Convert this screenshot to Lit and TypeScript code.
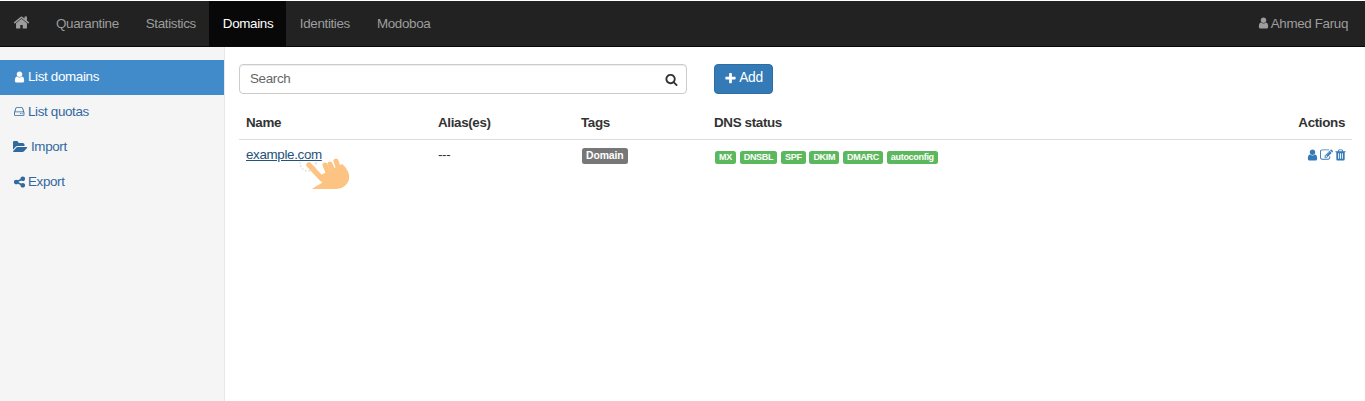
import { LitElement, html, css, svg } from "lit";
import { customElement } from "lit/decorators.js";

const P: Record<string, [string, string]> = {
  home: ["0 0 1792 1792", "M1472 992v480q0 26-19 45t-45 19h-384v-384h-256v384h-384q-26 0-45-19t-19-45v-480q0-1 .5-3t.5-3l575-474 575 474q1 2 1 6zm223-69l-62 74q-8 9-21 11h-3q-13 0-21-7l-692-577-692 577q-12 8-24 7-13-2-21-11l-62-74q-8-10-7-23.5t11-21.5l719-599q32-26 76-26t76 26l244 204v-195q0-14 9-23t23-9h192q14 0 23 9t9 23v408l219 182q10 8 11 21.5t-7 23.5z"],
  user: ["0 0 1792 1792", "M1536 1399q0 109-62.5 187t-150.5 78h-854q-88 0-150.5-78t-62.5-187q0-85 8.5-160.5t31.5-151.5 58.5-130 94-88.5 134.5-34.5q131 128 313 128t313-128q76 0 134.5 34.5t94 88.5 58.5 130 31.5 151.5 8.5 160.5zm-256-887q0 159-112.5 271.5t-271.5 112.5-271.5-112.5-112.5-271.5 112.5-271.5 271.5-112.5 271.5 112.5 112.5 271.5z"],
  search: ["0 0 1792 1792", "M1216 832q0-185-131.5-316.5t-316.5-131.5-316.5 131.5-131.5 316.5 131.5 316.5 316.5 131.5 316.5-131.5 131.5-316.5zm512 832q0 52-38 90t-90 38q-54 0-90-38l-343-342q-179 124-399 124-143 0-273.5-55.5t-225-150-150-225-55.5-273.5 55.5-273.5 150-225 225-150 273.5-55.5 273.5 55.5 225 150 150 225 55.5 273.5q0 220-124 399l343 343q37 37 37 90z"],
  plus: ["0 0 1792 1792", "M1600 736v192q0 40-28 68t-68 28h-416v416q0 40-28 68t-68 28h-192q-40 0-68-28t-28-68v-416h-416q-40 0-68-28t-28-68v-192q0-40 28-68t68-28h416v-416q0-40 28-68t68-28h192q40 0 68 28t28 68v416h416q40 0 68 28t28 68z"],
  share: ["0 0 1792 1792", "M1344 1024q133 0 226.5 93.5t93.5 226.5-93.5 226.5-226.5 93.5-226.5-93.5-93.5-226.5q0-12 2-34l-360-180q-92 86-218 86-133 0-226.5-93.5t-93.5-226.5 93.5-226.5 226.5-93.5q126 0 218 86l360-180q-2-22-2-34 0-133 93.5-226.5t226.5-93.5 226.5 93.5 93.5 226.5-93.5 226.5-226.5 93.5q-126 0-218-86l-360 180q2 22 2 34t-2 34l360 180q92-86 218-86z"],
  folder: ["0 0 1920 1792", "M1815 952q0 31-31 66l-336 396q-43 51-120.5 86.5t-143.5 35.5h-1088q-34 0-60.5-13t-26.5-43q0-31 31-66l336-396q43-51 120.5-86.5t143.5-35.5h1088q34 0 60.5 13t26.5 43zm-343-344v160h-832q-94 0-197 47.5t-164 119.5l-337 396-5 6q0-4-.5-12.5t-.5-12.5v-960q0-92 66-158t158-66h320q92 0 158 66t66 158v32h544q92 0 158 66t66 158z"],
  trash: ["0 0 1792 1792", "M704 1376v-704q0-14-9-23t-23-9h-64q-14 0-23 9t-9 23v704q0 14 9 23t23 9h64q14 0 23-9t9-23zm256 0v-704q0-14-9-23t-23-9h-64q-14 0-23 9t-9 23v704q0 14 9 23t23 9h64q14 0 23-9t9-23zm256 0v-704q0-14-9-23t-23-9h-64q-14 0-23 9t-9 23v704q0 14 9 23t23 9h64q14 0 23-9t9-23zm-544-992h448l-48-117q-7-9-17-11h-317q-10 2-17 11zm928 32v64q0 14-9 23t-23 9h-96v948q0 83-47 143.5t-113 60.5h-832q-66 0-113-58.5t-47-141.5v-952h-96q-14 0-23-9t-9-23v-64q0-14 9-23t23-9h309l70-167q15-37 54-63t79-26h320q40 0 79 26t54 63l70 167h309q14 0 23 9t9 23z"],
  edit: ["0 0 1792 1792", "M888 1184l116-116-152-152-116 116v56h96v96h56zm440-720q-16-16-33 1l-350 350q-17 17-1 33t33-1l350-350q17-17 1-33zm80 594v190q0 119-84.5 203.5t-203.5 84.5h-832q-119 0-203.5-84.5t-84.5-203.5v-832q0-119 84.5-203.5t203.5-84.5h832q63 0 117 25 15 7 18 23 3 17-9 29l-49 49q-14 14-32 8-23-6-45-6h-832q-66 0-113 47t-47 113v832q0 66 47 113t113 47h832q66 0 113-47t47-113v-126q0-13 9-22l64-64q15-15 35-7t20 29zm-96-738l288 288-672 672h-288v-288zm444 132l-92 92-288-288 92-92q28-28 68-28t68 28l152 152q28 28 28 68t-28 68z"],
  hdd: ["0 0 1792 1792", "M1040 1216q0 33-23.5 56.5t-56.5 23.5-56.5-23.5-23.5-56.5 23.5-56.5 56.5-23.5 56.5 23.5 23.5 56.5zm256 0q0 33-23.5 56.5t-56.5 23.5-56.5-23.5-23.5-56.5 23.5-56.5 56.5-23.5 56.5 23.5 23.5 56.5zm128 160v-320q0-13-9.5-22.5t-22.5-9.5h-1216q-13 0-22.5 9.5t-9.5 22.5v320q0 13 9.5 22.5t22.5 9.5h1216q13 0 22.5-9.5t9.5-22.5zm-1230-480h1180l-157-482q-4-13-16-21.5t-26-8.5h-782q-14 0-26 8.5t-16 21.5zm1358 160v320q0 66-47 113t-113 47h-1216q-66 0-113-47t-47-113v-320q0-25 16-75l197-606q17-53 63-86t101-33h782q55 0 101 33t63 86l197 606q16 50 16 75z"],
};

const icon = (name: string, cls = "") => html`<svg class="i ${cls}" viewBox=${P[name][0]} aria-hidden="true">${svg`<path fill="currentColor" d=${P[name][1]}></path>`}</svg>`;

@customElement("app-root")
export class AppRoot extends LitElement {
  static styles = css`
    :host { display: block; height: 401px; overflow: hidden; background: #fff; font: 13.4px/18px "Liberation Sans", Arial, sans-serif; letter-spacing: -.35px; color: #333; position: relative; }
    * { box-sizing: border-box; }
    .i { display: block; flex: none; width: 14px; height: 14px; }
    nav { margin-top: 1px; height: 46px; background: #222; border-bottom: 1px solid #080808; display: flex; color: #9d9d9d; }
    nav a { display: flex; align-items: center; padding: 0 13.5px; }
    nav a.home { padding: 0 13px; width: 42.5px; }
    nav a.home .i { width: 17px; height: 17px; margin-top: -2px; }
    nav a.on { background: #080808; color: #fff; width: 77px; }
    nav .user { margin-left: auto; gap: 1px; padding-right: 17px; }
    nav .user .i { width: 13px; height: 14px; margin-top: -1px; }
    .body { display: flex; height: 354px; }
    aside { width: 225px; flex: none; background: #f5f5f5; border-right: 1px solid #e7e7e7; padding-top: 13px; }
    aside a { height: 35px; display: flex; align-items: center; gap: 2px; padding: 0 0 2px 13px; color: #31699f; margin-right: -1px; }
    aside a.on { background: #428bca; color: #fff; margin-right: 0; }
    aside a .i { width: 13px; height: 14px; }
    aside a .wide { width: 15px; height: 14px; margin-right: 1px; }
    aside a .hd { width: 12px; height: 13px; margin: 0 0 0 1px; }
    main { flex: 1; padding: 17px 13px 0 14px; min-width: 0; }
    .tools { display: flex; gap: 27px; height: 30px; }
    .search { width: 448px; height: 30px; border: 1px solid #ccc; border-radius: 4px; display: flex; align-items: center; justify-content: space-between; padding: 0 8px 0 10px; color: #666; box-shadow: inset 0 1px 1px rgba(0,0,0,.075); }
    .search .i { color: #333; width: 13px; height: 13px; }
    .add { width: 59px; height: 30px; background: #337ab7; border: 1px solid #2e6da4; border-radius: 4px; color: #fff; display: flex; align-items: center; justify-content: center; gap: 2px; font-size: 13.8px; padding-bottom: 2px; }
    .add .i { width: 13px; height: 13px; }
    table { width: 100%; border-collapse: collapse; table-layout: fixed; margin-top: 13px; }
    th { height: 32px; text-align: left; font-weight: 700; padding: 3px 7px 7px; border-bottom: 1px solid #ddd; vertical-align: bottom; line-height: 18px; }
    td { padding: 6px 7px; height: 30px; vertical-align: top; }
    .c1 { width: 192px; } .c2 { width: 143px; } .c3 { width: 133px; } .c5 { width: 110px; }
    .r { text-align: right; }
    .name { color: #23527c; text-decoration: underline; }
    .label { display: inline-block; color: #fff; font-weight: 700; border-radius: 2.5px; vertical-align: top; white-space: nowrap; letter-spacing: -.3px; }
    .tag { background: #777; font-size: 10.4px; line-height: 16px; height: 16px; padding: 0 4px; margin: 2px 0 0 1px; letter-spacing: -.1px; }
    .dns { display: flex; gap: 3.8px; margin: 5px 0 0 1px; }
    .dns .label { background: #5cb85c; font-size: 9px; height: 13px; line-height: 13px; padding: 0 4px; }
    .acts { display: flex; justify-content: flex-end; gap: 1px; color: #337ab7; margin: 2px -2px 0 0; }
    .acts .i { width: 13px; height: 14px; }
    .hand { position: absolute; left: 295px; top: 150px; width: 60px; height: 45px; pointer-events: none; }
  `;

  render() {
    return html`
      <nav>
        <a class="home">${icon("home")}</a>
        <a>Quarantine</a><a>Statistics</a><a class="on">Domains</a><a>Identities</a><a>Modoboa</a>
        <a class="user">${icon("user")}Ahmed Faruq</a>
      </nav>
      <div class="body">
        <aside>
          <a class="on">${icon("user")}List domains</a>
          <a>${icon("hdd", "hd")}List quotas</a>
          <a>${icon("folder", "wide")}Import</a>
          <a>${icon("share")}Export</a>
        </aside>
        <main>
          <div class="tools">
            <div class="search"><span>Search</span>${icon("search")}</div>
            <div class="add">${icon("plus")}Add</div>
          </div>
          <table>
            <colgroup><col class="c1" /><col class="c2" /><col class="c3" /><col /><col class="c5" /></colgroup>
            <thead><tr><th>Name</th><th>Alias(es)</th><th>Tags</th><th>DNS status</th><th class="r">Actions</th></tr></thead>
            <tbody><tr>
              <td><span class="name">example.com</span></td>
              <td>---</td>
              <td><span class="label tag">Domain</span></td>
              <td><div class="dns">${["MX", "DNSBL", "SPF", "DKIM", "DMARC", "autoconfig"].map((t) => html`<span class="label">${t}</span>`)}</div></td>
              <td><div class="acts">${icon("user")}${icon("edit")}${icon("trash")}</div></td>
            </tr></tbody>
          </table>
        </main>
      </div>
      <svg class="hand" viewBox="0 0 60 45" aria-hidden="true">
        <circle cx="13" cy="13" r="8" fill="none" stroke="#b9c6cf" stroke-width="1" stroke-dasharray="1.5 2"></circle>
        <g stroke="#fcc383" stroke-linecap="round" fill="none">
          <path d="M14 15 L27 29" stroke-width="5.5"></path>
          <path d="M30 15 L35 27" stroke-width="5"></path>
          <path d="M35 14 L40 26" stroke-width="5"></path>
          <path d="M41 11 L45 23" stroke-width="5"></path>
        </g>
        <path fill="#fcc383" d="M17 39 C22 35 27 34 28 31 L26 25 L47 14 C52 18 55 24 54 29 C53 35 47 39 41 39 Z"></path>
      </svg>
    `;
  }
}
